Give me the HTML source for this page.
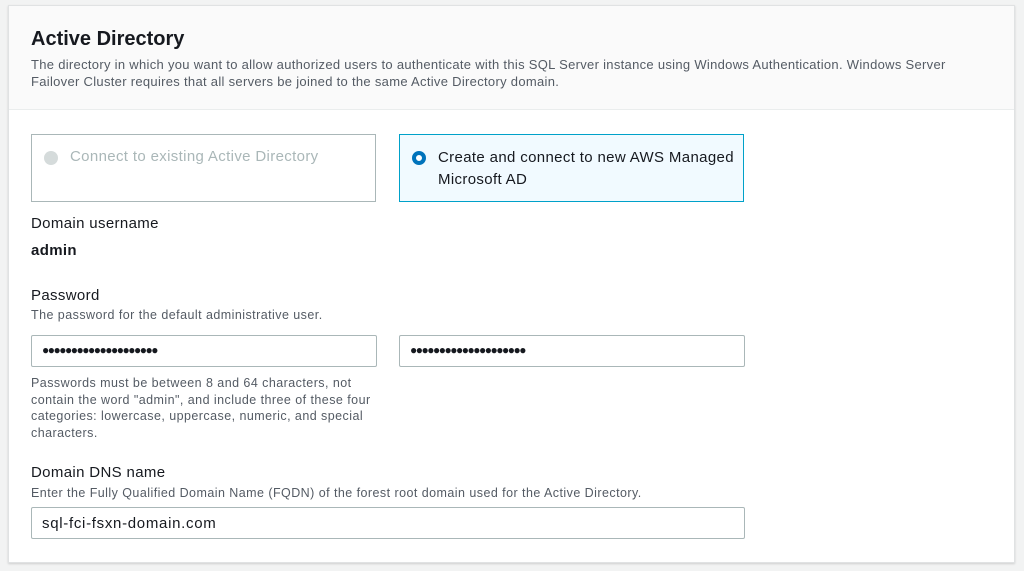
<!DOCTYPE html>
<html><head><style>
body{margin:0;background:#f2f3f3;font-family:"Liberation Sans",sans-serif;color:#16191f;width:1024px;height:571px;overflow:hidden;position:relative}
.panel{position:absolute;left:8px;top:5px;width:1005px;height:556px;background:#fff;border:1px solid #e0e2e3;box-shadow:0 1px 2px rgba(0,0,0,.15)}
.hdr{position:absolute;left:0;top:0;right:0;height:103px;background:#fafafa;border-bottom:1px solid #eaeded}
.a{position:absolute;white-space:nowrap}
.f15{font-size:15px;letter-spacing:0.35px}
.box{position:absolute;top:128px;width:343px;height:66px;border:1px solid #aab7b8}
.dot{position:absolute;left:12px;top:16px;width:14px;height:14px;border-radius:50%}
.inp{position:absolute;height:30px;border:1px solid #aab7b8;border-radius:2px;top:329px;width:344px}
.small{font-size:12.5px;letter-spacing:0.45px;color:#545b64}
</style></head><body>
<div class="panel">
<div class="hdr"></div>
<div class="a" style="left:22px;top:22px;font-size:20px;font-weight:bold">Active Directory</div>
<div class="a" style="left:22px;top:50px;font-size:13px;letter-spacing:0.3px;color:#545b64;line-height:17px">The directory in which you want to allow authorized users to authenticate with this SQL Server instance using Windows Authentication. Windows Server<br>Failover Cluster requires that all servers be joined to the same Active Directory domain.</div>
<div class="box" style="left:22px"><div class="dot" style="background:#d5dbdb"></div><div class="a f15" style="left:38px;top:13px;color:#aab7b8">Connect to existing Active Directory</div></div>
<div class="box" style="left:390px;background:#f1faff;border-color:#00a1c9"><div class="dot" style="background:#fff;border:4px solid #0073bb;width:6px;height:6px"></div><div class="a f15" style="left:38px;top:12px;line-height:22px">Create and connect to new AWS Managed<br>Microsoft AD</div></div>
<div class="a f15" style="left:22px;top:209px">Domain username</div>
<div class="a f15" style="left:22px;top:236px;font-weight:bold">admin</div>
<div class="a f15" style="left:22px;top:281px">Password</div>
<div class="a small" style="left:22px;top:302px">The password for the default administrative user.</div>
<div class="inp" style="left:22px"><div class="a" style="left:10px;top:7px;font-size:12px;letter-spacing:-1.5px">●●●●●●●●●●●●●●●●●●●●</div></div>
<div class="inp" style="left:390px"><div class="a" style="left:10px;top:7px;font-size:12px;letter-spacing:-1.5px">●●●●●●●●●●●●●●●●●●●●</div></div>
<div class="a small" style="left:22px;top:369px;line-height:16.7px">Passwords must be between 8 and 64 characters, not<br>contain the word "admin", and include three of these four<br>categories: lowercase, uppercase, numeric, and special<br>characters.</div>
<div class="a f15" style="left:22px;top:458px">Domain DNS name</div>
<div class="a small" style="left:22px;top:480px">Enter the Fully Qualified Domain Name (FQDN) of the forest root domain used for the Active Directory.</div>
<div class="inp" style="left:22px;top:501px;width:712px"><div class="a f15" style="left:10px;top:7px;letter-spacing:0.7px">sql-fci-fsxn-domain.com</div></div>
</div>
</body></html>
